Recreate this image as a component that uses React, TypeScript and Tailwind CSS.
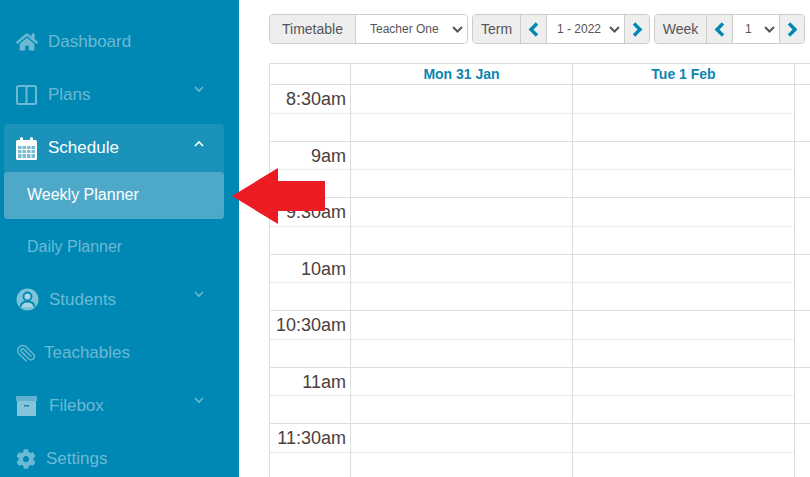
import type { ReactNode } from 'react';
import { FaHome, FaCog } from 'react-icons/fa';
import { Paperclip } from 'lucide-react';

const times = ['8:30am', '9am', '9:30am', '10am', '10:30am', '11am', '11:30am'];

function ColumnsIcon() {
  return (
    <svg width="21" height="20" viewBox="0 0 21 20" fill="none" stroke="currentColor" strokeWidth="2">
      <rect x="1" y="1" width="19" height="18" rx="1.5" />
      <path d="M10.5 1v18" />
    </svg>
  );
}

function CalendarIcon() {
  return (
    <svg width="21" height="23" viewBox="0 0 21 23" fill="currentColor">
      <rect x="1" y="7" width="19" height="15" opacity="0.4" />
      <path
        fillRule="evenodd"
        d="M1.500 3H4V1.500a1.500 1.500 0 0 1 3 0V3h7V1.500a1.500 1.500 0 0 1 3 0V3h2.500A1.500 1.500 0 0 1 21 4.500v17a1.500 1.500 0 0 1-1.500 1.500h-18A1.500 1.500 0 0 1 0 21.500v-17A1.500 1.500 0 0 1 1.500 3ZM2 9v3h3.500V9H2Zm4.500 0v3h3.500V9H6.500Zm4.500 0v3h3.500V9H11Zm4.500 0v3H19V9h-3.500ZM2 13v3h3.500v-3H2Zm4.500 0v3h3.500v-3H6.500Zm4.500 0v3h3.500v-3H11Zm4.500 0v3H19v-3h-3.500ZM2 17v4h3.500v-4H2Zm4.500 0v4h3.500v-4H6.500Zm4.500 0v4h3.500v-4H11Zm4.500 0v4H19v-4h-3.500Z"
      />
    </svg>
  );
}

function StudentIcon() {
  return (
    <svg width="23" height="23" viewBox="0 0 23 23" fill="none">
      <circle cx="11.5" cy="11.5" r="11" fill="#7cc3da" />
      <circle cx="11.5" cy="8.500" r="4" fill="#a5d6e6" stroke="#0088b5" strokeWidth="1.8" />
      <path d="M4.500 19c.5-4 3-5.500 7-5.500s6.500 1.500 7 5.500" fill="#a5d6e6" stroke="#0088b5" strokeWidth="1.8" />
    </svg>
  );
}

function BoxIcon() {
  return (
    <svg width="21" height="20" viewBox="0 0 21 20">
      <rect x="0" y="0" width="21" height="5" rx="0.500" fill="#5fb2cf" />
      <rect x="1" y="5" width="19" height="15" rx="0.500" fill="#84c5dc" />
      <rect x="8" y="9" width="5" height="1.500" fill="#1f7fa3" />
    </svg>
  );
}

function Caret({ up }: { up?: boolean }) {
  return (
    <svg width="10" height="7" viewBox="0 0 10 7" fill="none" stroke="currentColor" strokeWidth="1.6" className={`absolute left-[194px] ${up ? 'top-[16px]' : 'top-[18px]'}`}>
      <path d={up ? 'M1 6l4-4 4 4' : 'M1 1l4 4 4-4'} />
    </svg>
  );
}

function NavItem({ icon, label, gap, caret }: { icon: ReactNode; label: string; gap: number; caret?: boolean }) {
  return (
    <div className="relative flex h-[53px] items-center pl-4 text-[17px] text-[#6cb9d4]">
      <span className="flex h-6 items-center">{icon}</span>
      <span style={{ marginLeft: gap }}>{label}</span>
      {caret && <Caret />}
    </div>
  );
}

function Addon({ children, className = '' }: { children: ReactNode; className?: string }) {
  return (
    <div className={`flex h-full items-center justify-center border-r border-[#ccc] bg-[#eee] text-[#555] ${className}`}>
      {children}
    </div>
  );
}

function Arrow({ right }: { right?: boolean }) {
  return (
    <svg width="11" height="15" viewBox="0 0 11 15" fill="none" stroke="#0088b5" strokeWidth="3.400">
      <path d={right ? 'M2 1.500 8 7.500 2 13.500' : 'M9 1.500 3 7.500 9 13.500'} />
    </svg>
  );
}

function Pick({ label, className = '' }: { label: string; className?: string }) {
  return (
    <div className={`relative flex h-full items-center bg-white text-[12px] text-[#555] ${className}`}>
      <span>{label}</span>
      <svg width="11" height="7" viewBox="0 0 11 7" fill="none" stroke="#555" strokeWidth="2" className="absolute right-[4px] top-[11px]">
        <path d="M1 1l4.500 4.500L10 1" />
      </svg>
    </div>
  );
}

function Group({ children, className = '' }: { children: ReactNode; className?: string }) {
  return (
    <div className={`flex h-[30px] overflow-hidden rounded-[4px] border border-[#ccc] text-[14px] ${className}`}>{children}</div>
  );
}

export default function App() {
  return (
    <div className="relative flex h-[477px] w-[810px] overflow-hidden bg-white font-['Liberation_Sans',Arial,sans-serif]">
      <aside className="h-full w-[239px] shrink-0 bg-[#0088b5] pt-[15px]">
        <NavItem icon={<FaHome size={22} />} label="Dashboard" gap={10} />
        <NavItem icon={<ColumnsIcon />} label="Plans" gap={11} caret />
        <div className="mx-1 mt-[3px] w-[220px] rounded-[4px] bg-[#1a92ba]">
          <div className="relative -ml-1 flex h-12 w-[224px] items-center pl-4 text-[17px] text-white">
            <CalendarIcon />
            <span className="ml-[11px]">Schedule</span>
            <Caret up />
          </div>
          <div className="flex h-[47px] items-center rounded-[4px] bg-[#4ea9c9] pb-[2px] pl-[23px] text-[16px] text-white">Weekly Planner</div>
        </div>
        <div className="flex h-[54px] items-center pl-[27px] pt-[1px] text-[16px] text-[#6cb9d4]">Daily Planner</div>
        <NavItem icon={<StudentIcon />} label="Students" gap={10} caret />
        <NavItem icon={<Paperclip size={20} strokeWidth={1.7} className="rotate-90" />} label="Teachables" gap={8} />
        <NavItem icon={<BoxIcon />} label="Filebox" gap={12} caret />
        <NavItem icon={<FaCog size={20} />} label="Settings" gap={10} />
      </aside>

      <main className="ml-[30px] flex-1 pt-[14px]">
        <div className="flex gap-[4px]">
          <Group className="w-[199px]">
            <Addon className="w-[86px]">Timetable</Addon>
            <Pick label="Teacher One" className="flex-1 pl-[14px]" />
          </Group>
          <Group className="w-[178px]">
            <Addon className="w-[48px]">Term</Addon>
            <Addon className="w-[26px]"><Arrow /></Addon>
            <Pick label="1 - 2022" className="w-[78px] border-r border-[#ccc] pl-[10px]" />
            <Addon className="flex-1 border-r-0"><Arrow right /></Addon>
          </Group>
          <Group className="w-[151px]">
            <Addon className="w-[52px]">Week</Addon>
            <Addon className="w-[26px]"><Arrow /></Addon>
            <Pick label="1" className="w-[47px] border-r border-[#ccc] pl-[12px]" />
            <Addon className="flex-1 border-r-0"><Arrow right /></Addon>
          </Group>
        </div>

        <div className="mt-[19px] w-[541px] border-t border-[#ddd]">
          <div className="flex h-[21px] border-b border-[#ddd] text-center text-[14px] font-bold text-[#0d85ad]">
            <div className="w-[82px] border-x border-[#ddd]" />
            <div className="flex w-[222px] items-center justify-center border-r border-[#ddd]">Mon 31 Jan</div>
            <div className="flex w-[222px] items-center justify-center border-r border-[#ddd]">Tue 1 Feb</div>
          </div>
          {times.map((t) => (
            <div key={t} className="flex h-[56.5px] border-b border-[#ddd]">
              <div className="w-[82px] border-x border-[#ddd]">
                <div className="h-[28.500px] border-b border-dotted border-[#ddd] pr-1 pt-[2px] text-right text-[18px] leading-[24px] text-[#4b4040]">{t}</div>
              </div>
              <div className="w-[222px] border-r border-[#ddd]">
                <div className="h-[28.500px] border-b border-dotted border-[#ddd]" />
              </div>
              <div className="w-[222px] border-r border-[#ddd]">
                <div className="h-[28.500px] border-b border-dotted border-[#ddd]" />
              </div>
            </div>
          ))}
        </div>
      </main>

      <svg width="96" height="58" viewBox="0 0 96 58" className="absolute left-[231px] top-[167px]">
        <path d="M1 29 47 1v13h47v30H47v13z" fill="#ed1c24" />
      </svg>
    </div>
  );
}
